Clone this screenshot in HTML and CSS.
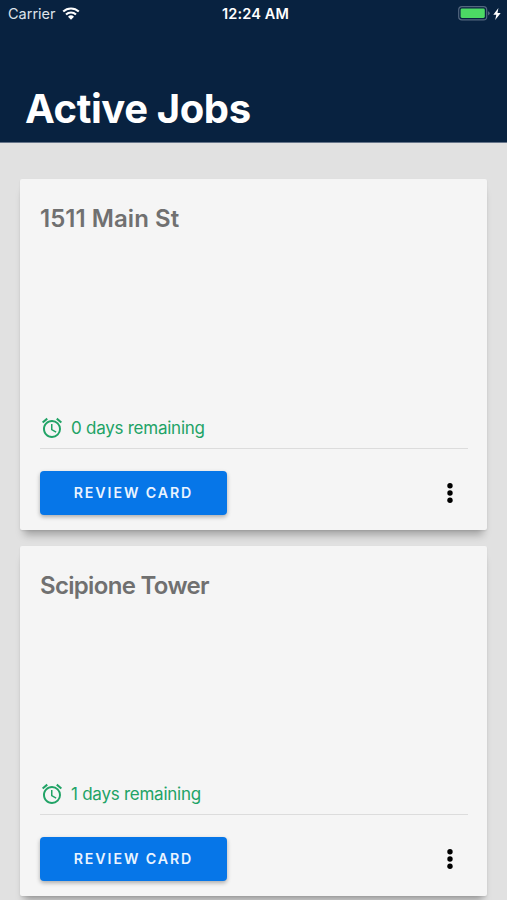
FILE: index.html
```html
<!DOCTYPE html>
<html lang="en">
<head>
    <meta charset="UTF-8">
    <meta name="viewport" content="width=device-width, initial-scale=1.0">
    <title>Active Jobs</title>
    <link rel="stylesheet" href="styles.css">
</head>
<body>
    <header class="header">
        <div class="status-bar">
            <div class="status-left">
                <span class="carrier">Carrier</span>
                <svg class="wifi" viewBox="0 0 18 13">
                    <path d="M1.2 4.6a11.4 11.4 0 0 1 15.6 0M4 7.5a7.3 7.3 0 0 1 10 0" fill="none" stroke="#fff" stroke-width="2.1"/>
                    <path d="M9 12.8L6 9.8a4.3 4.3 0 0 1 6 0z" fill="#fff"/>
                </svg>
            </div>
            <span class="time">12:24 AM</span>
            <div class="status-right">
                <svg class="battery" viewBox="0 0 32 15">
                    <rect x=".7" y=".7" width="28" height="13.2" rx="3.2" fill="none" stroke="#53667e" stroke-width="1.2"/>
                    <rect x="2.6" y="2.6" width="24.2" height="9.4" rx="1.4" fill="#4cd964"/>
                    <path d="M30 5.2q1.7.6 1.7 2.1T30 9.4z" fill="#53667e"/>
                </svg>
                <svg class="bolt" viewBox="0 0 8 12">
                    <path d="M5.4 0L.3 6.8h3L2.2 12l5.5-7H4.5z" fill="#fff"/>
                </svg>
            </div>
        </div>
        <h1>Active Jobs</h1>
    </header>

    <main class="jobs">
        <section class="card">
            <h2>1511 Main St</h2>
            <div class="remaining">
                <svg class="alarm" viewBox="0 0 24 24">
                    <path d="M22 5.72l-4.6-3.86-1.29 1.53 4.6 3.86L22 5.72zM7.88 3.39L6.6 1.86 2 5.71l1.29 1.53 4.59-3.85zM12.5 8H11v6l4.75 2.85.75-1.23-4-2.37V8zM12 4c-4.97 0-9 4.03-9 9s4.02 9 9 9a9 9 0 0 0 0-18zm0 16c-3.87 0-7-3.13-7-7s3.13-7 7-7 7 3.13 7 7-3.13 7-7 7z"/>
                </svg>
                <span class="days">0 days remaining</span>
            </div>
            <div class="actions">
                <button class="review">REVIEW CARD</button>
                <button class="more" aria-label="More">
                    <svg viewBox="0 0 8 22">
                        <circle cx="4" cy="3.7" r="2.7"/>
                        <circle cx="4" cy="11" r="2.7"/>
                        <circle cx="4" cy="18.3" r="2.7"/>
                    </svg>
                </button>
            </div>
        </section>

        <section class="card">
            <h2 class="tower">Scipione Tower</h2>
            <div class="remaining">
                <svg class="alarm" viewBox="0 0 24 24">
                    <path d="M22 5.72l-4.6-3.86-1.29 1.53 4.6 3.86L22 5.72zM7.88 3.39L6.6 1.86 2 5.71l1.29 1.53 4.59-3.85zM12.5 8H11v6l4.75 2.85.75-1.23-4-2.37V8zM12 4c-4.97 0-9 4.03-9 9s4.02 9 9 9a9 9 0 0 0 0-18zm0 16c-3.87 0-7-3.13-7-7s3.13-7 7-7 7 3.13 7 7-3.13 7-7 7z"/>
                </svg>
                <span class="days">1 days remaining</span>
            </div>
            <div class="actions">
                <button class="review">REVIEW CARD</button>
                <button class="more" aria-label="More">
                    <svg viewBox="0 0 8 22">
                        <circle cx="4" cy="3.7" r="2.7"/>
                        <circle cx="4" cy="11" r="2.7"/>
                        <circle cx="4" cy="18.3" r="2.7"/>
                    </svg>
                </button>
            </div>
        </section>
    </main>
</body>
</html>
```
FILE: styles.css
```css
* {
    margin: 0;
    padding: 0;
    box-sizing: border-box;
}
body {
    height: 900px;
    overflow: hidden;
    background-color: #e1e1e1;
    font-family: Inter, "Liberation Sans", sans-serif;
}
svg {
    display: block;
}
.header {
    height: 143px;
    background-color: #082240;
    border-bottom: 1px solid #66758a;
    color: #fff;
}
.status-bar {
    display: grid;
    grid-template-columns: 1fr auto 1fr;
    align-items: center;
    height: 27px;
    padding: 0 6px 0 8px;
}
.status-left, .status-right {
    display: flex;
    align-items: center;
}
.status-right {
    justify-content: flex-end;
    gap: 3px;
}
.carrier {
    width: 47px;
    margin-right: 7px;
    font-size: 14.5px;
    color: #dde3ea;
}
.wifi {
    width: 18px;
    height: 13px;
}
.time {
    padding-left: 2px;
    font-size: 14.5px;
    font-weight: 600;
    letter-spacing: 0.15px;
}
.battery {
    width: 32px;
    height: 15px;
}
.bolt {
    width: 8px;
    height: 12px;
}
h1 {
    padding: 57px 0 0 25px;
    font-size: 40px;
    font-weight: 700;
    line-height: 50px;
    letter-spacing: -0.4px;
}
.jobs {
    display: flex;
    flex-direction: column;
    gap: 16.1px;
    padding: 36.4px 19.6px 0 20.4px;
}
.card {
    display: flex;
    flex-direction: column;
    height: 350.2px;
    flex-shrink: 0;
    padding: 25.1px 19.4px 15px 19.6px;
    background-color: #f5f5f5;
    border-radius: 2px;
    box-shadow: 0 9px 8px -4px rgba(0, 0, 0, 0.28), 0 1px 2px rgba(0, 0, 0, 0.08);
}
h2 {
    font-size: 24px;
    font-weight: 600;
    line-height: 30px;
    letter-spacing: 0.05px;
    color: #707070;
}
.tower {
    letter-spacing: -0.68px;
}
.remaining {
    display: flex;
    align-items: center;
    gap: 7px;
    height: 41px;
    margin-top: auto;
    border-bottom: 1px solid #dcdcdc;
    color: #21a366;
}
.alarm {
    width: 24px;
    height: 24px;
    fill: #21a366;
}
.days {
    font-size: 17px;
    letter-spacing: -0.25px;
}
.actions {
    display: flex;
    align-items: center;
    justify-content: space-between;
    height: 44px;
    margin-top: 22px;
}
.review {
    width: 187px;
    height: 44px;
    border: none;
    border-radius: 4px;
    background-color: #0676e8;
    box-shadow: 0 2px 4px rgba(0, 0, 0, 0.3);
    color: #eaf4ff;
    font-family: inherit;
    font-size: 14.2px;
    font-weight: 600;
    letter-spacing: 1.9px;
    cursor: pointer;
}
.more {
    margin-right: 14px;
    border: none;
    background: none;
    cursor: pointer;
}
.more svg {
    width: 8px;
    height: 22px;
}
```
